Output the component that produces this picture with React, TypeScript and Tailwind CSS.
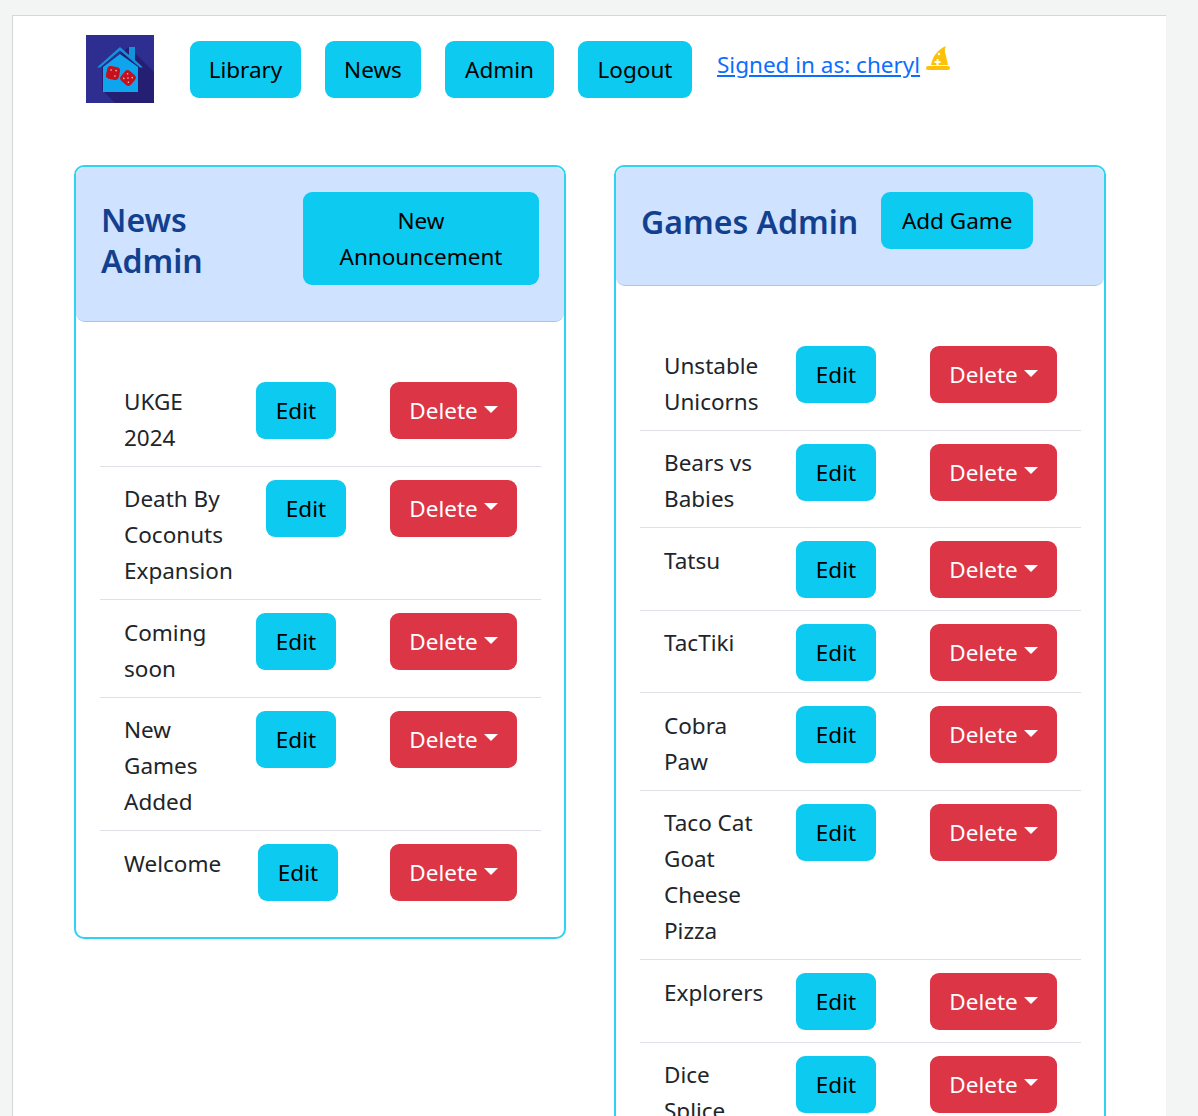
const font = "font-['Noto_Sans',sans-serif]";

const newsRows = [
  { lines: ["UKGE", "2024"], nameClass: "w-[132px]" },
  { lines: ["Death By", "Coconuts", "Expansion"], nameClass: "w-[142px]" },
  { lines: ["Coming", "soon"], nameClass: "w-[132px]" },
  { lines: ["New", "Games", "Added"], nameClass: "w-[132px]" },
  { lines: ["Welcome"], nameClass: "w-[134px]" },
];

const gameRows = [
  ["Unstable", "Unicorns"],
  ["Bears vs", "Babies"],
  ["Tatsu"],
  ["TacTiki"],
  ["Cobra", "Paw"],
  ["Taco Cat", "Goat", "Cheese", "Pizza"],
  ["Explorers"],
  ["Dice", "Splice"],
];

const CyanButton = ({ label, className }: { label: string; className: string }) => (
  <button className={`h-[57px] shrink-0 rounded-[9px] bg-[#0dcaf0] pt-[1px] text-center text-[22.5px] leading-[36px] text-black ${className}`}>
    {label}
  </button>
);

const DeleteButton = () => (
  <button className="ml-auto flex h-[57px] w-[127px] shrink-0 items-center justify-center gap-[6px] rounded-[9px] bg-[#dc3545] pt-[1px] text-[22.5px] leading-[36px] text-white">
    <span>Delete</span>
    <span className="mb-[4px] h-0 w-0 border-x-[7px] border-t-[7px] border-x-transparent border-t-white"></span>
  </button>
);

const Row = ({ lines, nameClass, last }: { lines: string[]; nameClass: string; last?: boolean }) => (
  <div className={`flex items-start px-6 pt-[13px] pb-[11.5px] ${last ? "" : "border-b border-[#dee2e6]"}`}>
    <div className={`${nameClass} -mb-[1.5px] shrink-0 pt-[1.5px] text-[22.5px] leading-[36px] text-[#212529]`}>
      {lines.map((line) => (
        <div key={line}>{line}</div>
      ))}
    </div>
    <CyanButton label="Edit" className="w-[80px]" />
    <DeleteButton />
  </div>
);

const Logo = () => (
  <svg width="68" height="68" viewBox="0 0 68 68" className="shrink-0">
    <rect width="68" height="68" fill="#2e2d90" />
    <path d="M43 12 L68 37 L68 68 L29 68 L16 55 L16 32 Z" fill="#241f73" />
    <path d="M17 32 L34 19 L52 32 L52 57 L17 57 Z" fill="#0ea5ee" />
    <path d="M11 32.500 L34 12 L43 20 L43 12 L49 12 L49 25 L57 32.500 L54 32.500 L34 15.500 L14 32.500 Z" fill="#1492dc" />
    <g transform="rotate(12 27 38)">
      <rect x="20.500" y="31.500" width="13" height="13" rx="3.500" fill="#c4111d" />
      <circle cx="24.500" cy="35.500" r="0.800" fill="#f4b8b8" />
      <circle cx="29.500" cy="40.500" r="0.800" fill="#f4b8b8" />
      <circle cx="29.500" cy="35" r="0.800" fill="#f4b8b8" />
    </g>
    <g transform="rotate(40 42 43)">
      <rect x="35.500" y="36.500" width="13" height="13" rx="3.500" fill="#c4111d" />
      <circle cx="39" cy="40" r="0.800" fill="#f4b8b8" />
      <circle cx="45" cy="40" r="0.800" fill="#f4b8b8" />
      <circle cx="42" cy="43" r="0.800" fill="#f4b8b8" />
      <circle cx="39" cy="46" r="0.800" fill="#f4b8b8" />
      <circle cx="45" cy="46" r="0.800" fill="#f4b8b8" />
    </g>
  </svg>
);

const Hat = () => (
  <svg width="24" height="25" viewBox="0 0 24 25" className="mt-[-1px] ml-[6px] shrink-0">
    <path d="M5 19 C7 10 11 4 20 0 C18 4 19 6 20 10 L22 19 Z" fill="#ffc107" />
    <path d="M8.500 15 H10.500 V13 H12.500 V15 H14.500 V17 H12.500 V19 H10.500 V17 H8.500 Z" fill="#fff" />
    <circle cx="13" cy="8" r="1.200" fill="#fff" />
    <rect x="0" y="20" width="24" height="4" rx="2" fill="#ffc107" />
  </svg>
);

export default function App() {
  return (
    <div className={`h-[1116px] overflow-hidden bg-[#f3f4f4] pt-[15px] pl-[12px] ${font}`}>
      <div className="h-[1101px] w-[1154px] border-t border-l border-[#d6d6d6] bg-white">
        <nav className="flex items-start pt-[19px] pl-[73px]">
          <Logo />
          <div className="mt-[6px] ml-[36px] flex gap-6">
            <CyanButton label="Library" className="w-[111px]" />
            <CyanButton label="News" className="w-[96px]" />
            <CyanButton label="Admin" className="w-[109px]" />
            <CyanButton label="Logout" className="w-[114px]" />
          </div>
          <div className="mt-[12px] ml-[25px] flex items-start">
            <a href="#" className="text-[22.5px] leading-[36px] text-[#0d6efd] underline">
              Signed in as: cheryl
            </a>
            <Hat />
          </div>
        </nav>

        <div className="mt-[62px] flex items-start gap-[48px] pl-[61px]">
          <div className="w-[492px] rounded-[10px] border-2 border-[#2fd2f2]">
            <div className="flex h-[155px] items-start justify-between rounded-[9px] border-b border-[#9ec5fe] bg-[#cfe2ff] pt-[25px] pr-[25px] pl-[25px]">
              <h2 className="pt-[7px] text-[32px] leading-[41px] font-semibold text-[#12408f]">
                News
                <br />
                Admin
              </h2>
              <button className="h-[93px] w-[236px] rounded-[9px] bg-[#0dcaf0] pt-[1px] text-[22.5px] leading-[36px] text-black">
                New
                <br />
                Announcement
              </button>
            </div>
            <div className="pt-[47px] pr-[23px] pb-6 pl-6">
              {newsRows.map((row, i) => (
                <Row key={row.lines[0]} lines={row.lines} nameClass={row.nameClass} last={i === newsRows.length - 1} />
              ))}
            </div>
          </div>

          <div className="w-[492px] rounded-[10px] border-2 border-[#2fd2f2]">
            <div className="flex h-[119px] items-start gap-[23px] rounded-[9px] border-b border-[#9ec5fe] bg-[#cfe2ff] pt-[25px] pl-[25px]">
              <h2 className="pt-[9px] text-[32px] leading-[41px] font-semibold text-[#12408f]">Games Admin</h2>
              <CyanButton label="Add Game" className="w-[152px]" />
            </div>
            <div className="pt-[47px] pr-[23px] pb-6 pl-6">
              {gameRows.map((lines) => (
                <Row key={lines[0]} lines={lines} nameClass="w-[132px]" />
              ))}
            </div>
          </div>
        </div>
      </div>
    </div>
  );
}
